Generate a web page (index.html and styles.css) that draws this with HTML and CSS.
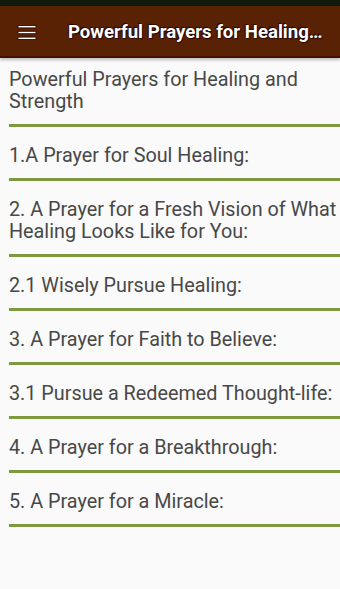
FILE: index.html
```html
<!DOCTYPE html>
<html>
<head>
<meta charset="utf-8">
<link rel="stylesheet" href="styles.css">
</head>
<body>
<div class="status"></div>
<header class="toolbar">
  <svg class="menu" width="20" height="16" viewBox="0 0 20 16">
    <rect x="1" y="1.5" width="18" height="2.4" fill="#fff" stroke="#3a0a06" stroke-width="0.9"/>
    <rect x="1" y="7.3" width="18" height="2.4" fill="#fff" stroke="#3a0a06" stroke-width="0.9"/>
    <rect x="1" y="13.1" width="18" height="2.4" fill="#fff" stroke="#3a0a06" stroke-width="0.9"/>
  </svg>
  <div class="title">Powerful Prayers for Healing and Strength</div>
</header>
<main class="list">
  <div class="item first">Powerful Prayers for Healing and Strength</div>
  <div class="item">1.A Prayer for Soul Healing:</div>
  <div class="item">2. A Prayer for a Fresh Vision of What Healing Looks Like for You:</div>
  <div class="item">2.1 Wisely Pursue Healing:</div>
  <div class="item">3. A Prayer for Faith to Believe:</div>
  <div class="item">3.1 Pursue a Redeemed Thought-life:</div>
  <div class="item">4. A Prayer for a Breakthrough:</div>
  <div class="item">5. A Prayer for a Miracle:</div>
</main>
</body>
</html>
```
FILE: styles.css
```css
html, body {
  margin: 0;
  padding: 0;
}
body {
  width: 340px;
  height: 589px;
  background: #fafafa;
  font-family: Roboto, "Liberation Sans", sans-serif;
  overflow: hidden;
}
.status {
  height: 6px;
  background: #101a0c;
}
.toolbar {
  height: 52px;
  box-sizing: border-box;
  background: #5a2204;
  border-bottom: 2px solid #4a0c0a;
  box-shadow: 0 2px 3px rgba(0,0,0,0.25);
  display: flex;
  align-items: center;
  padding: 0 13px 0 17px;
  position: relative;
}
.menu {
  flex: none;
  margin-top: 1px;
}
.title {
  flex: 1;
  min-width: 0;
  margin-left: 31px;
  color: #fff;
  font-weight: bold;
  font-size: 18.6px;
  white-space: nowrap;
  overflow: hidden;
  text-overflow: ellipsis;
  text-shadow: 0 0 1px #2a0804, 1px 1px 1px #2a0804, -1px -1px 1px #2a0804;
  margin-top: 1px;
}
.list {
  margin-left: 9px;
}
.item {
  font-size: 19.8px;
  line-height: 22px;
  color: #484848;
  padding: 18px 0 11px;
  border-bottom: 3px solid #7d9b3e;
}
.item.first {
  padding-top: 11px;
}
```
